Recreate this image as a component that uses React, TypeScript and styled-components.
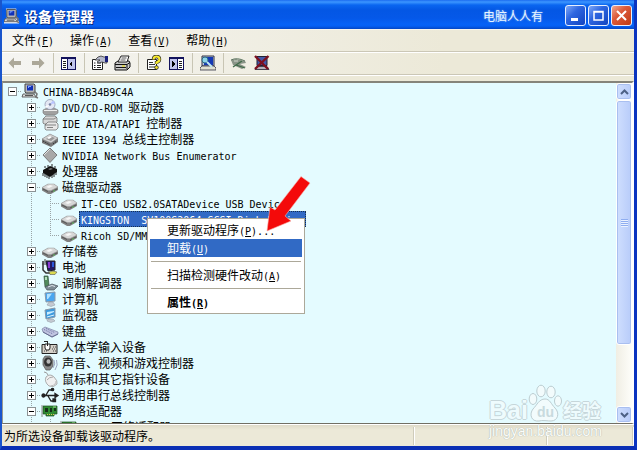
import React, { ReactNode } from "react";
import styled, { createGlobalStyle, css } from "styled-components";

const CJK = '"Noto Sans CJK SC", sans-serif';

const GlobalStyle = createGlobalStyle`
  * { box-sizing: border-box; }
  body { margin: 0; overflow: hidden; background: #ece9d8; }
  button { font: inherit; color: inherit; border: 0; padding: 0; background: none; }
  ul { list-style: none; margin: 0; padding: 0; }
`;

/* ---------- text ---------- */

const LatinRun = styled.span`
  font-family: "DejaVu Sans Mono", monospace;
  font-size: 10px;
`;

/* Half-width runs take a 6px cell, full-width characters a 12px one. */
const Mixed = ({ children }: { children: string }) => (
  <>
    {children.split(/([\x20-\x7e]+)/).map((part, i) =>
      /^[\x20-\x7e]/.test(part) ? <LatinRun key={i}>{part}</LatinRun> : part
    )}
  </>
);

const Accel = ({ label, letter, tail = "" }: { label: string; letter: string; tail?: string }) => (
  <>
    {label}
    <LatinRun>
      (<u>{letter}</u>){tail}
    </LatinRun>
  </>
);

/* ---------- window ---------- */

const Window = styled.div`
  position: relative;
  height: 100vh;
  display: flex;
  flex-direction: column;
  border: solid #0a37c4;
  border-width: 0 3px 4px 2px;
  border-left-color: #1a55cc;
  border-right-color: #0a34c0;
  border-bottom-color: #0a2fb4;
  background: #ece9d8;
  font: 12px/16px ${CJK};
  color: #000;
  white-space: pre;
  overflow: hidden;
`;

const TitleBar = styled.header`
  flex: none;
  height: 29px;
  margin: 0 -3px 0 -2px;
  padding: 2px 5px 0 4px;
  display: flex;
  align-items: center;
  background: linear-gradient(#1c6cf0 0, #3c96ff 2px, #0a66f0 5px, #0457e4 10px, #0558e8 18px, #0662f6 24px, #0560f4 26px, #0446c4 29px);
`;

const Title = styled.h1`
  flex: 1;
  margin: 0 0 0 4px;
  font: bold 14px/20px ${CJK};
  color: #fff;
  text-shadow: 1px 1px #0a2a80;
`;

const Signature = styled.span`
  margin-right: 22px;
  font-size: 12px;
  line-height: 20px;
  color: #e8f4ff;
  text-shadow: 0 0 2px #8cc0ff;
`;

const Captions = styled.div`
  display: flex;
  gap: 2px;
`;

const CaptionButton = styled.button<{ $close?: boolean }>`
  width: 21px;
  height: 21px;
  display: grid;
  place-items: center;
  border: 1px solid #e6efff;
  border-radius: 3px;
  background: ${(p) =>
    p.$close
      ? "linear-gradient(135deg, #f0a890, #dc5a3a 40%, #c03a14)"
      : "linear-gradient(135deg, #7ea8f8, #2e66e0 40%, #1244c0)"};
`;

const MenuBar = styled.nav`
  flex: none;
  height: 22px;
  padding-left: 2px;
  display: flex;
  align-items: center;
  background: linear-gradient(90deg, #f5f5f2, #ece9d8 70%);
  border-top: 1px solid #f6f5ee;
`;

const MenuButton = styled.button`
  height: 20px;
  padding: 0 8px;
`;

const ToolBar = styled.div`
  flex: none;
  height: 24px;
  padding-left: 1px;
  display: flex;
  align-items: center;
  border: solid #cbc7b6;
  border-width: 1px 0;
  box-shadow: inset 0 1px #fff, 0 1px #fff;
  background: linear-gradient(90deg, #f5f5f2, #ece9d8 70%);
`;

const ToolButton = styled.button`
  width: 23px;
  height: 22px;
  display: grid;
  place-items: center;
`;

const ToolDivider = styled.span`
  width: 1px;
  height: 20px;
  margin: 0 3px 0 4px;
  background: #c8c5b4;
`;

const Client = styled.main`
  flex: 1;
  min-height: 0;
  margin-top: 6px;
  display: flex;
  border: solid #716f64;
  border-width: 2px 0 1px 1px;
  border-top-color: #85847a;
  border-left-color: #9a9a92;
  border-right: 2px solid #fff;
  background: #e4fbff;
`;

/* ---------- tree ---------- */

const Tree = styled.ul`
  flex: 1;
  min-width: 0;
  overflow: hidden;
`;

const Row = styled.div`
  height: 16px;
  display: flex;
  align-items: center;
`;

const vDots = "repeating-linear-gradient(#9aa4a6 0 1px, transparent 1px 2px)";
const hDots = "repeating-linear-gradient(90deg, #9aa4a6 0 1px, transparent 1px 2px)";

type Joint = "blank" | "through" | "tee" | "end" | "root";

const joints = {
  blank: css``,
  through: css`
    background: ${vDots} 9px 0 / 1px 16px no-repeat;
  `,
  tee: css`
    background: ${vDots} 9px 0 / 1px 16px no-repeat, ${hDots} 9px 8px / 10px 1px no-repeat;
  `,
  end: css`
    background: ${vDots} 9px 0 / 1px 8px no-repeat, ${hDots} 9px 8px / 10px 1px no-repeat;
  `,
  root: css`
    background: ${hDots} 9px 8px / 10px 1px no-repeat;
  `,
};

const Slot = styled.span<{ $joint: Joint }>`
  flex: none;
  width: 19px;
  height: 16px;
  display: grid;
  place-items: center;
  ${(p) => joints[p.$joint]}
`;

const Toggle = styled.button<{ $open: boolean }>`
  width: 9px;
  height: 9px;
  border: 1px solid #8c9294;
  background: linear-gradient(#000, #000) center / 5px 1px no-repeat,
    linear-gradient(#000, #000) center / 1px ${(p) => (p.$open ? 0 : 5)}px no-repeat, #fff;
`;

const NodeIcon = styled.svg`
  flex: none;
  width: 18px;
  height: 16px;
  overflow: visible;
`;

const Label = styled.span<{ $selected?: boolean }>`
  height: 16px;
  margin-left: 1px;
  padding: 0 1px;
  line-height: 14px;
  border: 1px ${(p) => (p.$selected ? "dotted #16304f" : "solid transparent")};
  ${(p) => p.$selected && "background: #316ac5; color: #fff;"}
`;

/* ---------- scroll bar ---------- */

const ScrollBar = styled.div`
  flex: none;
  width: 16px;
  display: flex;
  flex-direction: column;
  background: linear-gradient(90deg, #f0eee4, #fefefa);
`;

const scrollFace = css`
  border: 1px solid #fff;
  border-radius: 3px;
  box-shadow: inset 0 0 0 1px #a9bff0;
  background: linear-gradient(90deg, #cfdefe, #b8ccfa);
`;

const ScrollArrow = styled.button`
  flex: none;
  height: 17px;
  display: grid;
  place-items: center;
  ${scrollFace}
`;

const ScrollTrack = styled.div`
  flex: 1;
  display: flex;
  flex-direction: column;
`;

const ScrollThumb = styled.div`
  flex: 0 0 80%;
  display: grid;
  align-content: center;
  justify-content: center;
  gap: 1px;
  ${scrollFace}
  span { width: 7px; height: 1px; background: #8fadf0; box-shadow: 0 1px #eaf1ff; }
`;

/* ---------- status bar ---------- */

const StatusBar = styled.footer`
  flex: none;
  height: 22px;
  display: flex;
  align-items: center;
  border-top: 1px solid #fff;
  background: linear-gradient(#dedac8, #ece9d8 5px);
`;

const StatusPane = styled.div<{ $width?: number }>`
  flex: ${(p) => (p.$width ? `0 0 ${p.$width}px` : "1")};
  height: 18px;
  padding-left: 2px;
  line-height: 18px;
  border-right: 1px solid #fff;
  box-shadow: inset -1px 0 #cfccbb;
`;

/* ---------- overlays ---------- */

const ContextMenu = styled.div`
  position: absolute;
  left: 145px;
  top: 218px;
  width: 158px;
  padding: 2px;
  border: 1px solid #aca899;
  background: #fff;
`;

const ContextItem = styled.button<{ $active?: boolean; $bold?: boolean }>`
  display: block;
  width: 100%;
  height: 18px;
  padding-left: 17px;
  line-height: 18px;
  text-align: left;
  font-weight: ${(p) => (p.$bold ? 700 : 400)};
  ${(p) => p.$active && "background: #316ac5; color: #fff;"}
`;

const ContextRule = styled.hr`
  height: 1px;
  margin: 4px 1px;
  border: 0;
  background: #aca899;
`;

const Pointer = styled.svg`
  position: absolute;
  left: 260px;
  top: 174px;
  width: 52px;
  height: 60px;
`;

const outline = (c: string) => `1px 0 ${c}, -1px 0 ${c}, 0 1px ${c}, 0 -1px ${c}`;

const Watermark = styled.div`
  position: absolute;
  right: 29px;
  bottom: 8px;
  width: 116px;
  color: #eefbfd;
  font-family: "Liberation Sans", ${CJK};
  text-shadow: ${outline("#c6d6da")};
`;

const Brand = styled.div`
  display: flex;
  align-items: flex-end;
  height: 42px;
`;

const BrandWord = styled.b`
  font-size: 25px;
  line-height: 28px;
`;

const BrandPaw = styled.svg`
  width: 34px;
  height: 38px;
  margin: 0 1px 2px 0;
  text-shadow: none;
`;

const BrandCjk = styled.b`
  font-size: 19px;
  line-height: 28px;
  font-family: ${CJK};
`;

const Address = styled.div`
  font-size: 14px;
  line-height: 14px;
  color: #fbfdfa;
  text-shadow: 0 0 1px #a8b0aa, 0 0 1px #c0c4bc;
`;

/* ---------- drawings ---------- */

const Computer = () => (
  <g>
    <path d="M3 1h9l1 1v8H4L3 9z" fill="#b8b8b8" stroke="#444" />
    <path d="M5 2.5h6v5H5z" fill="#1030b8" />
    <path d="M6 3h3v1H7v1H6z" fill="#7ea4ff" />
    <path d="M1 11h11l2 3H0z" fill="#dedede" stroke="#444" strokeWidth=".8" />
    <path d="M3 12.5h8" stroke="#555" />
    <path d="M12 8l3 3-1 3 2 1" stroke="#777" strokeWidth="1.6" fill="none" />
  </g>
);

const DriveShape = () => (
  <g>
    <path d="M1 8.5 7 5h6l4 3v3l-7 4h-3L1 11.500z" fill="#808080" />
    <path d="M1 8.500 7 5h6l4 3-7 3.500H7z" fill="#d6d6d6" stroke="#999" strokeWidth=".5" />
    <path d="M5 8l4-2 3 1-4 2z" fill="#f6f6f6" />
    <path d="M2 10l5 2.500M10 13l6-3" stroke="#555" />
    <path d="M12 12h2" stroke="#5fbf5f" />
  </g>
);

const icons: Record<string, ReactNode> = {
  computer: <Computer />,
  dvd: (
    <g>
      <path d="M2 11l4-2h7l4 2v3l-3 2H4l-2-2z" fill="#a0a0a0" stroke="#777" strokeWidth=".6" />
      <path d="M3 11.500h13" stroke="#eee" />
      <circle cx="9" cy="5.500" r="5" fill="#e4e8f4" stroke="#9298b0" strokeWidth=".8" />
      <path d="M9 5 12 1.500a5 5 0 0 1 1.800 3z" fill="#b8c4ff" />
      <path d="M9 6 5 9a5 5 0 0 1-.8-2z" fill="#fff" />
      <circle cx="9" cy="5.500" r="1.300" fill="#7b83a4" />
    </g>
  ),
  ide: (
    <g stroke="#666" strokeWidth=".7">
      <path d="M2 4l3-3h9l2 2v4l-2 2H3L2 8z" fill="#d8d8d8" />
      <path d="M2 4h11l3-2" fill="none" />
      <path d="M4 10l3-3h8l2 2v4l-2 2H5l-1-1z" fill="#e8e8e8" />
      <path d="M4 10h11M6 12.500h6" fill="none" stroke="#555" />
    </g>
  ),
  ieee: (
    <g>
      <path d="M1 8l8-5 8 4v4l-7 5-9-4z" fill="#777" />
      <path d="M1 8l8-5 8 4-7 5z" fill="#d0d0d0" stroke="#888" strokeWidth=".5" />
      <path d="M5 8l4-3 5 2-4 3z" fill="#9a9a9a" />
      <path d="M6 7l3-2 2 1-3 2z" fill="#fff" />
      <path d="M2 10l7 4M12 13l4-3" stroke="#333" strokeDasharray="1.500 1" />
    </g>
  ),
  diamond: (
    <g>
      <path d="M9 1l7 7-7 7.500L2 8z" fill="#a8a8a8" stroke="#666" strokeWidth=".8" />
      <path d="M9 2 3 8" stroke="#e2e2e2" />
    </g>
  ),
  cpu: (
    <g>
      <path d="M2 7l7-4 7 3v3l-7 5-7-4z" fill="#111" />
      <path d="M2 10v3M4 11v3M6 12v3M8 13v3M11 12v3M13 11v3M15 9v3M4 3v2M7 2v2M11 1v3M14 3v2" stroke="#222" />
      <path d="M7 6l3-1 2 1-3 1z" fill="#777" />
    </g>
  ),
  drive: <DriveShape />,
  battery: (
    <g>
      <path d="M2 2v9l3 3h7" fill="none" stroke="#333" strokeWidth="1.500" />
      <path d="M5 2h9v9l-7 1z" fill="#221a66" stroke="#222" />
      <path d="M7 3h2v6H7z" fill="#8a3ad0" />
      <path d="M11 3h2v5h-2z" fill="#2c58d8" />
      <path d="M4 0v4M1 5h4" stroke="#444" />
      <path d="M8 13l4-1 4 1-2 2.500H9z" fill="#dada50" stroke="#555" strokeWidth=".6" />
    </g>
  ),
  modem: (
    <g>
      <path d="M3 1h4l1 9-4 2z" fill="#4f8a5c" stroke="#35503e" strokeWidth=".7" />
      <path d="M4 2h2v3H4z" fill="#b4e0bc" />
      <path d="M4 12l7-3 6 2-4 4H6z" fill="#7d8b95" stroke="#4b565e" strokeWidth=".7" />
      <path d="M7 12l4-1.500 3 1" stroke="#dce4ea" fill="none" />
    </g>
  ),
  desktop: (
    <g>
      <path d="M4 2l10-1v9L5 11z" fill="#4aa6f0" stroke="#8a98a8" />
      <path d="M6 3l5-.5L7 8H6z" fill="#b4e2ff" />
      <path d="M8 11h4l2 3-4 1.500L6 14z" fill="#c4cad2" stroke="#8a929c" strokeWidth=".5" />
    </g>
  ),
  monitor: (
    <g>
      <path d="M4 3l10-2v9L5 12z" fill="#3c9ade" stroke="#8a98a8" />
      <path d="M6 5l7-1v1L6 8z" fill="#c8ecff" />
      <path d="M6 10l7-2" stroke="#e2f6ff" />
      <path d="M7 12h5l2 2-4 1.500L6 14z" fill="#c4cad2" stroke="#8a929c" strokeWidth=".5" />
    </g>
  ),
  keyboard: (
    <g>
      <path d="M1 6l3-2 13 5v2l-6 3L2 9z" fill="#c0c4e0" stroke="#7d82a4" strokeWidth=".7" />
      <path d="M3 6.500l9 4.500M5 5.500l9 4.200" stroke="#6a70a0" strokeDasharray="1 1" />
      <path d="M2 9l9 5 6-3" stroke="#666c90" fill="none" />
    </g>
  ),
  hid: (
    <g>
      <path d="M1 5.500h15v9H1z" fill="#d4d0c8" stroke="#222" />
      <path d="M12 8h3M11 10h4M12 12h3M3 12h4" stroke="#444" strokeDasharray="1 1" />
      <path d="M4 5h5v4l-1 2H5L4 9z" fill="#fff" stroke="#222" />
      <path d="M6.500 3v4M3 2.500h4" stroke="#222" fill="none" />
    </g>
  ),
  sound: (
    <g>
      <path d="M4 1h5l3 4v6l-3 4H5L2 10V4z" fill="#8a8a8a" stroke="#555" strokeWidth=".7" />
      <ellipse cx="7" cy="7" rx="4" ry="4.500" fill="#333" />
      <ellipse cx="7.500" cy="6.500" rx="2" ry="2.300" fill="#b8b8b8" />
      <path d="M13 5q2 4-1 8M15.500 5q2 5-1.500 10" stroke="#9fa8c4" fill="none" />
    </g>
  ),
  mouse: (
    <g>
      <path d="M3 1q3 0 4 3" stroke="#999" fill="none" />
      <path d="M5 6q4-4 8 0 4 4 3 7-3 4-8 2-5-4-3-9z" fill="#f0f0f0" stroke="#999" strokeWidth=".8" />
      <path d="M6 9q2-3 6-3" stroke="#aaa" fill="none" />
      <path d="M15 10q0 4-5 5" stroke="#bbb" fill="none" />
    </g>
  ),
  usb: (
    <g stroke="#222" fill="none" strokeWidth="1.300">
      <path d="M2 8.500h14M5 8l3-5h3M7 9l3 5h2" />
      <circle cx="2.500" cy="8.500" r="1.500" fill="#222" />
      <circle cx="11.500" cy="2.500" r="1.200" fill="#222" />
      <path d="M12 12h2.500v2.500H12z" fill="#222" />
      <path d="M14 6.500l3 2-3 2z" fill="#222" />
    </g>
  ),
  net: (
    <g>
      <path d="M2 3h14v8h-3v2H5v-2H2z" fill="#2f8a32" stroke="#1c4c20" strokeWidth=".7" />
      <path d="M4 5h3v4H4zM9 5h2v4H9zM13 5h2v3h-2z" fill="#16301a" />
      <path d="M6 11.500h7" stroke="#e0cc50" strokeDasharray="1 1" />
      <path d="M1 2v12" stroke="#888" />
      <path d="M12 4h3" stroke="#9cdc90" />
    </g>
  ),
};

const Arrow = ({ flip }: { flip?: boolean }) => (
  <svg width="14" height="12" viewBox="0 0 14 12">
    <path d={flip ? "M13.500 6 8 .5V4H1v4h7v3.500z" : "M.5 6 6 .5V4h7v4H6v3.500z"} fill="#aca899" />
  </svg>
);

const PaneIcon = ({ right }: { right?: boolean }) => (
  <svg width="15" height="13" viewBox="0 0 15 13" shapeRendering="crispEdges">
    <path d="M0 0h15v13H0z" fill="#12125c" />
    <path d="M1 2h13v10H1z" fill="#fff" />
    <path d={right ? "M1 2h7v10H1z" : "M7 2h7v10H7z"} fill="#c0c4ec" />
    <path d={right ? "M8 2h1v10H8z" : "M6 2h1v10H6z"} fill="#12125c" />
    <path d={right ? "M10 4h3M10 6h3M10 8h3M10 10h3" : "M2 4h3M2 6h3M2 8h3M2 10h3"} stroke="#222" />
    <path d={right ? "M3 4v6l3-3z" : "M11 4v6L8 7z"} fill="#000" />
  </svg>
);

const PropertiesIcon = () => (
  <svg width="17" height="16" viewBox="0 0 17 16">
    <path d="M1.500 4.500h10v10h-10z" fill="#fff" stroke="#222" />
    <path d="M3 8h1.500M6 8h4M3 10.500h1.500M6 10.500h4M3 12.500h1.500M6 12.500h4" stroke="#222" />
    <path d="M4 5l3-3 3-1 3 1h3v6h-2l-3-1-3 1-2-1 3-2z" fill="#b4b8cc" stroke="#333" strokeWidth=".8" />
    <path d="M14 1h3v6h-3z" fill="#1a1f7c" />
  </svg>
);

const PrinterIcon = () => (
  <svg width="17" height="16" viewBox="0 0 17 16">
    <path d="M1 8l3-2h11l1 2v4l-3 3H1z" fill="#c8c8c8" stroke="#111" />
    <path d="M4 7 7 1h8l-2 6z" fill="#fff" stroke="#222" />
    <path d="M7.500 3h5M6.500 5h5" stroke="#555" />
    <path d="M1 9.500h12l3-2M2 12.500h10M13 10v4" stroke="#111" fill="none" />
    <path d="M8 11h3" stroke="#e4d840" strokeWidth="1.500" />
  </svg>
);

const HelpIcon = () => (
  <svg width="16" height="16" viewBox="0 0 16 16">
    <path d="M1.500 4.500h9v10h-9z" fill="#fff" stroke="#222" />
    <path d="M3 7.500h4M3 9.500h6M3 12h6" stroke="#333" />
    <path d="M7.500 4.500q0-3 3-3t3 3q0 2-3 3V9" fill="none" stroke="#222" strokeWidth="3.400" />
    <path d="M7.500 4.500q0-3 3-3t3 3q0 2-3 3V9" fill="none" stroke="#f8ea30" strokeWidth="2.200" />
    <circle cx="10.500" cy="12.500" r="1.800" fill="#f4e428" stroke="#222" strokeWidth=".8" />
  </svg>
);

const ScanIcon = () => (
  <svg width="16" height="16" viewBox="0 0 16 16">
    <path d="M2 1h12v10H2z" fill="#b8c8dc" stroke="#334" />
    <path d="M4 2h9v8H4z" fill="#1438b4" />
    <path d="M0 13l2-2h12l2 2v2H0z" fill="#e0e0d0" stroke="#334" strokeWidth=".8" />
    <circle cx="5" cy="5" r="3" fill="#8fd4e8" stroke="#2c6c88" />
    <path d="M7 7l5 5" stroke="#bfe8f4" strokeWidth="2" />
  </svg>
);

const DisableIcon = () => (
  <svg width="17" height="13" viewBox="0 0 17 13">
    <path d="M1 3l5-1 9 2 1 2-6 1 6 3-4 2-9-4z" fill="#8a9488" />
    <path d="M1 3q6-3 14 1" stroke="#5c7460" fill="none" />
    <path d="M3 10l9-6M6 8l9 3" stroke="#3f6a48" strokeWidth="1.300" />
    <path d="M4 4h4" stroke="#d0d8cc" />
  </svg>
);

const RemoveIcon = () => (
  <svg width="16" height="16" viewBox="0 0 16 16">
    <path d="M3 1.500h10v9H3z" fill="#4458a8" stroke="#223" />
    <path d="M1 14.500l2-3h10l2 3z" fill="#b8b4bc" stroke="#223" strokeWidth=".8" />
    <path d="M1 1l13 13M14.500 1 1 14" stroke="#7c1020" strokeWidth="2.400" />
  </svg>
);

const Chevron = ({ down }: { down?: boolean }) => (
  <svg width="9" height="6" viewBox="0 0 9 6">
    <path d={down ? "M1 1l3.500 3.500L8 1" : "M1 5l3.500-3.500L8 5"} fill="none" stroke="#4d6185" strokeWidth="2" />
  </svg>
);

/* ---------- data ---------- */

type Device = { name: string; icon: string; open?: boolean; selected?: boolean; children?: Device[] };

const devices: Device[] = [
  { name: "DVD/CD-ROM 驱动器", icon: "dvd" },
  { name: "IDE ATA/ATAPI 控制器", icon: "ide" },
  { name: "IEEE 1394 总线主控制器", icon: "ieee" },
  { name: "NVIDIA Network Bus Enumerator", icon: "diamond" },
  { name: "处理器", icon: "cpu" },
  {
    name: "磁盘驱动器",
    icon: "drive",
    open: true,
    children: [
      { name: "IT-CEO USB2.0SATADevice USB Device", icon: "drive" },
      { name: "KINGSTON  SV100S2064 SCSI Disk Device", icon: "drive", selected: true },
      { name: "Ricoh SD/MMC Disk Device", icon: "drive" },
    ],
  },
  { name: "存储卷", icon: "drive" },
  { name: "电池", icon: "battery" },
  { name: "调制解调器", icon: "modem" },
  { name: "计算机", icon: "desktop" },
  { name: "监视器", icon: "monitor" },
  { name: "键盘", icon: "keyboard" },
  { name: "人体学输入设备", icon: "hid" },
  { name: "声音、视频和游戏控制器", icon: "sound" },
  { name: "鼠标和其它指针设备", icon: "mouse" },
  { name: "通用串行总线控制器", icon: "usb" },
  {
    name: "网络适配器",
    icon: "net",
    open: true,
    children: [{ name: "1394 网络适配器", icon: "net" }],
  },
];

const menus = [
  ["文件", "F"],
  ["操作", "A"],
  ["查看", "V"],
  ["帮助", "H"],
];

const tools: { label: string; icon: ReactNode }[][] = [
  [
    { label: "后退", icon: <Arrow /> },
    { label: "前进", icon: <Arrow flip /> },
  ],
  [{ label: "显示/隐藏控制台树", icon: <PaneIcon /> }],
  [
    { label: "属性", icon: <PropertiesIcon /> },
    { label: "打印", icon: <PrinterIcon /> },
  ],
  [
    { label: "帮助", icon: <HelpIcon /> },
    { label: "显示/隐藏操作窗格", icon: <PaneIcon right /> },
  ],
  [{ label: "扫描检测硬件改动", icon: <ScanIcon /> }],
  [
    { label: "停用", icon: <DisableIcon /> },
    { label: "卸载", icon: <RemoveIcon /> },
  ],
];

const DeviceNode = ({ device, last }: { device: Device; last: boolean }) => (
  <li>
    <Row>
      <Slot $joint="blank" />
      <Slot $joint={last && !device.open ? "end" : "tee"}>
        <Toggle $open={!!device.open} aria-label={device.name} aria-expanded={!!device.open} />
      </Slot>
      <NodeIcon viewBox="0 0 18 16">{icons[device.icon]}</NodeIcon>
      <Label>
        <Mixed>{device.name}</Mixed>
      </Label>
    </Row>
    {device.children && (
      <ul>
        {device.children.map((child, i) => (
          <li key={child.name}>
            <Row>
              <Slot $joint="blank" />
              <Slot $joint="through" />
              <Slot $joint={!last && i === device.children!.length - 1 ? "end" : "tee"} />
              <NodeIcon viewBox="0 0 18 16">{icons[child.icon]}</NodeIcon>
              <Label $selected={child.selected}>
                <Mixed>{child.name}</Mixed>
              </Label>
            </Row>
          </li>
        ))}
      </ul>
    )}
  </li>
);

export default function App() {
  return (
    <Window>
      <GlobalStyle />
      <TitleBar>
        <svg width="16" height="16" viewBox="0 0 17 16">
          <path d="M2 0h11v10l3 4v2H0v-3l3-3z" fill="#e8ecf4" />
          <Computer />
        </svg>
        <Title>设备管理器</Title>
        <Signature>电脑人人有</Signature>
        <Captions>
          <CaptionButton aria-label="最小化">
            <svg width="13" height="13">
              <path d="M2 9h7v3H2z" fill="#fff" />
            </svg>
          </CaptionButton>
          <CaptionButton aria-label="最大化">
            <svg width="13" height="13">
              <path d="M2 2.500h9v8.500H2zM1.500 3h10" fill="none" stroke="#fff" strokeWidth="1.500" />
            </svg>
          </CaptionButton>
          <CaptionButton $close aria-label="关闭">
            <svg width="13" height="13">
              <path d="M2 2l9 9M11 2l-9 9" stroke="#fff" strokeWidth="2" />
            </svg>
          </CaptionButton>
        </Captions>
      </TitleBar>

      <MenuBar>
        {menus.map(([label, letter]) => (
          <MenuButton key={letter}>
            <Accel label={label} letter={letter} />
          </MenuButton>
        ))}
      </MenuBar>

      <ToolBar>
        {tools.map((group, i) => (
          <React.Fragment key={i}>
            {i > 0 && <ToolDivider />}
            {group.map((tool) => (
              <ToolButton key={tool.label} aria-label={tool.label}>
                {tool.icon}
              </ToolButton>
            ))}
          </React.Fragment>
        ))}
      </ToolBar>

      <Client>
        <Tree>
          <li>
            <Row>
              <Slot $joint="root">
                <Toggle $open aria-label="CHINA-BB34B9C4A" aria-expanded />
              </Slot>
              <NodeIcon viewBox="0 0 18 16">{icons.computer}</NodeIcon>
              <Label>
                <Mixed>CHINA-BB34B9C4A</Mixed>
              </Label>
            </Row>
            <ul>
              {devices.map((device, i) => (
                <DeviceNode key={device.name} device={device} last={i === devices.length - 1} />
              ))}
            </ul>
          </li>
        </Tree>
        <ScrollBar>
          <ScrollArrow aria-label="向上滚动">
            <Chevron />
          </ScrollArrow>
          <ScrollTrack>
            <ScrollThumb>
              <span />
              <span />
              <span />
              <span />
            </ScrollThumb>
          </ScrollTrack>
          <ScrollArrow aria-label="向下滚动">
            <Chevron down />
          </ScrollArrow>
        </ScrollBar>
      </Client>

      <StatusBar>
        <StatusPane>为所选设备卸载该驱动程序。</StatusPane>
        <StatusPane $width={133} />
        <StatusPane $width={86} />
      </StatusBar>

      <ContextMenu role="menu">
        <ContextItem role="menuitem">
          <Accel label="更新驱动程序" letter="P" tail="..." />
        </ContextItem>
        <ContextItem role="menuitem" $active>
          <Accel label="卸载" letter="U" />
        </ContextItem>
        <ContextRule />
        <ContextItem role="menuitem">
          <Accel label="扫描检测硬件改动" letter="A" />
        </ContextItem>
        <ContextRule />
        <ContextItem role="menuitem" $bold>
          <Accel label="属性" letter="R" />
        </ContextItem>
      </ContextMenu>

      <Pointer viewBox="0 0 52 60">
        <path d="M39 2.500 48 9 23 42l6 5L5 57 8 33l5 3z" fill="#f40a0a" stroke="#f8b0a8" strokeWidth=".6" />
      </Pointer>

      <Watermark>
        <Brand>
          <BrandWord>Bai</BrandWord>
          <BrandPaw viewBox="0 0 34 38">
            <g fill="#f2fbfc" stroke="#bccdd1" strokeWidth="1">
              <ellipse cx="5" cy="15" rx="3.800" ry="5.500" />
              <ellipse cx="13" cy="7" rx="4.200" ry="5.800" />
              <ellipse cx="23" cy="8" rx="4.200" ry="5.800" />
              <ellipse cx="30" cy="17" rx="3.500" ry="5.200" />
              <path d="M17 15c5 0 6 5 10 9 5 5 3 13-4 13-3 0-9-1-12 0-8 1-10-7-6-12 4-4 6-10 12-10z" />
            </g>
            <text x="9" y="33" fontFamily="Liberation Sans" fontWeight="700" fontSize="14" fill="#c8dade">
              du
            </text>
          </BrandPaw>
          <BrandCjk>经验</BrandCjk>
        </Brand>
        <Address>jingyan.baidu.com</Address>
      </Watermark>
    </Window>
  );
}
